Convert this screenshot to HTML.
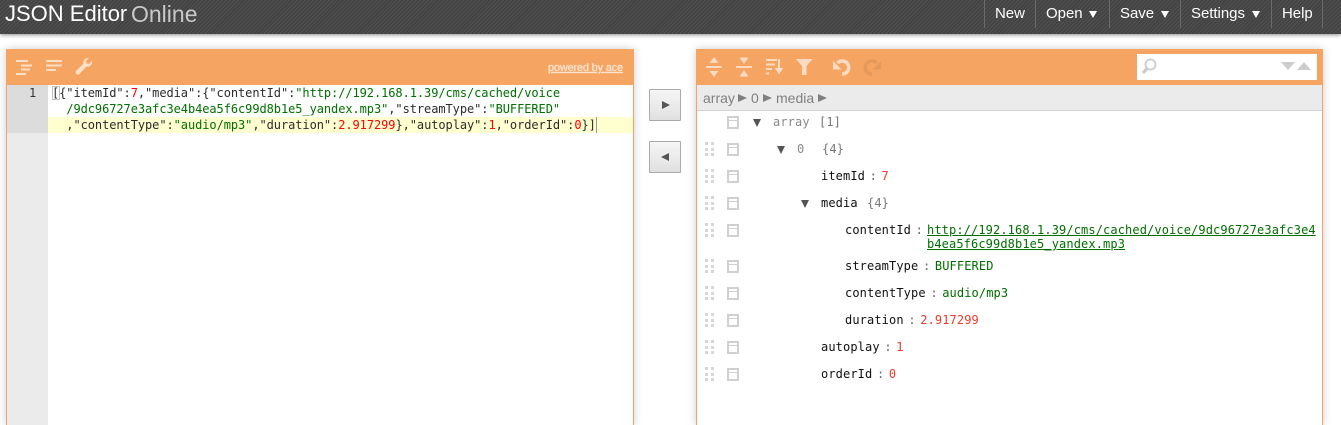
<!DOCTYPE html>
<html><head><meta charset="utf-8"><style>
html,body{margin:0;padding:0;background:#fff;width:1341px;height:425px;overflow:hidden}
.a{position:absolute}
body{font-family:"Liberation Sans",sans-serif;position:relative}
#hdr{left:0;top:0;width:1341px;height:34px;background:repeating-linear-gradient(135deg,#515151 0 1px,#434343 1px 2.8px);box-shadow:0 1px 4px rgba(0,0,0,.45)}
.menu{top:1px;height:26px;line-height:26px;font-size:15px;color:#fff;white-space:nowrap;letter-spacing:-.03px}
.sep{top:0;width:1px;height:28px;background:#6a6a6a}
.arr{top:11px;width:0;height:0;border-top:7px solid #fff;border-left:4.500px solid transparent;border-right:4.500px solid transparent}
.panel{box-shadow:0 0 8px rgba(0,0,0,.2);background:#fff;border-left:1px solid #f5a462;border-right:1px solid #f5a462;box-sizing:border-box}
.bar{background:#f5a462;height:36px}
.m{font-family:"DejaVu Sans Mono",monospace;font-size:12px;white-space:pre}
.l{left:52px;height:16px;line-height:16px;color:#2c2c2c;letter-spacing:-.07px}
.s{color:#007000}.n{color:#f00}
.r{height:14px;line-height:14px;letter-spacing:.11px}
.k{color:#111}.g{color:#888}.c{color:#777;margin-left:2px}
.p{display:inline-block;width:16.500px;text-align:center;color:#666;letter-spacing:0}
.t{color:#006f00}.v{color:#ee3a2a}
.btn{left:649px;width:32px;height:32px;box-sizing:border-box;border:1px solid #aaa;background:linear-gradient(#f6f6f6,#e0e0e0);border-radius:1px}
.drag{left:705px;width:9px;height:14px;background:
 linear-gradient(#d6d6d6,#d6d6d6) 0 0/3px 3px no-repeat,linear-gradient(#d6d6d6,#d6d6d6) 6px 0/3px 3px no-repeat,
 linear-gradient(#d6d6d6,#d6d6d6) 0 5.500px/3px 3px no-repeat,linear-gradient(#d6d6d6,#d6d6d6) 6px 5.500px/3px 3px no-repeat,
 linear-gradient(#d6d6d6,#d6d6d6) 0 11px/3px 3px no-repeat,linear-gradient(#d6d6d6,#d6d6d6) 6px 11px/3px 3px no-repeat}
.box{left:727px;width:12px;height:13px;box-sizing:border-box;border:2px solid #d0d0d0}
.box i{display:block;height:1px;margin-top:2px;background:#d0d0d0}
.tri{width:0;height:0;border-left:4.500px solid transparent;border-right:4.500px solid transparent;border-top:8px solid #555}
.nav{top:85px;height:26px;line-height:26px;font-size:14px;color:#808080}
.na{top:94px;width:0;height:0;border-left:9px solid #808080;border-top:4px solid transparent;border-bottom:4px solid transparent}
</style></head><body>
<div class="a" id="hdr"></div>
<div class="a" style="left:5px;top:-3px;height:34px;line-height:34px;font-size:22px;color:#fff;white-space:nowrap">JSON Editor</div>
<div class="a" style="left:131px;top:-3px;height:34px;line-height:34px;font-size:23px;color:#c9c9c9;white-space:nowrap">Online</div>

<div class="a sep" style="left:984px"></div><div class="a sep" style="left:1035px"></div><div class="a sep" style="left:1109px"></div><div class="a sep" style="left:1180px"></div><div class="a sep" style="left:1271px"></div><div class="a sep" style="left:1322px"></div>
<div class="a menu" style="left:995px">New</div>
<div class="a menu" style="left:1046px">Open</div><div class="a arr" style="left:1089px"></div>
<div class="a menu" style="left:1120px">Save</div><div class="a arr" style="left:1161px"></div>
<div class="a menu" style="left:1191px">Settings</div><div class="a arr" style="left:1252px"></div>
<div class="a menu" style="left:1282px">Help</div>

<!-- left panel -->
<div class="a panel" style="left:6px;top:49px;width:628px;height:376px">
 <div class="bar"></div>
 <div class="a" style="left:0;top:36px;width:41px;height:340px;background:#ebebeb"></div>
 <div class="a" style="left:0;top:36px;width:41px;height:48px;background:#dcdcdc"></div>
 <div class="a" style="left:41px;top:68px;width:585px;height:16px;background:#ffffd0"></div>
</div>
<svg class="a" style="left:14px;top:57px" width="80" height="22" fill="#fbe0c8">
 <rect x="2" y="3" width="12" height="2"/><rect x="7" y="7.500" width="11" height="2"/><rect x="7" y="11.500" width="9" height="2"/><rect x="2" y="16" width="10" height="2"/>
 <rect x="32" y="3" width="16" height="2"/><rect x="32" y="7.500" width="16" height="2"/><rect x="32" y="12" width="10" height="2"/>
 <path d="M62 14l7.500-7.500c-1-3 1.500-6 5.500-5.500l-3 3 .5 2.500 2.500.5 3-3c.5 4-2.500 6.500-5.500 5.500l-7 7.500c-2 2-5-1-3.500-3z"/>
</svg>
<div class="a" style="left:548px;top:61px;font-size:11px;color:#fde3cd;text-decoration:underline;white-space:nowrap;line-height:14px;letter-spacing:-.2px;text-shadow:0 0 1px #fde3cd">powered by ace</div>
<div class="a m" style="left:29px;top:85px;line-height:16px;color:#333">1</div>
<div class="a" style="left:52px;top:86px;width:8px;height:14px;box-sizing:border-box;border:1px solid #c0c0c0"></div>
<div class="a m l" style="top:85px">[{"itemId":<span class="n">7</span>,"media":{"contentId":<span class="s">"http://192.168.1.39/cms/cached/voice</span></div>
<div class="a m l" style="top:101px">  <span class="s">/9dc96727e3afc3e4b4ea5f6c99d8b1e5_yandex.mp3"</span>,"streamType":<span class="s">"BUFFERED"</span></div>
<div class="a m l" style="top:117px">  ,"contentType":<span class="s">"audio/mp3"</span>,"duration":<span class="n">2.917299</span>},"autoplay":<span class="n">1</span>,"orderId":<span class="n">0</span>}]</div>
<div class="a" style="left:596px;top:117px;width:1px;height:16px;background:#999"></div>

<!-- buttons -->
<div class="a btn" style="top:89px"></div>
<div class="a" style="left:662px;top:101px;border-left:8px solid #555;border-top:4px solid transparent;border-bottom:4px solid transparent"></div>
<div class="a btn" style="top:141px"></div>
<div class="a" style="left:661px;top:153px;border-right:8px solid #555;border-top:4px solid transparent;border-bottom:4px solid transparent"></div>

<!-- right panel -->
<div class="a panel" style="left:696px;top:49px;width:627px;height:376px"><div class="bar"></div></div>
<div class="a" style="left:697px;top:85px;width:625px;height:26px;background:#ebebeb;border-bottom:1px solid #d3d3d3;box-sizing:border-box"></div>
<svg class="a" style="left:700px;top:54px" width="190" height="26">
 <g fill="#fbdcc3">
 <rect x="6" y="12" width="16" height="2"/><path d="M14 3l4.500 6h-9zM14 23l4.500-6h-9z"/>
 <rect x="36" y="12" width="16" height="2"/><path d="M44 10l4.500-6.500h-9zM44 16l4.500 6.500h-9z"/>
 <rect x="66" y="5" width="11" height="2"/><rect x="66" y="9.500" width="9" height="2"/><rect x="66" y="14" width="6" height="2"/><rect x="66" y="18.500" width="3" height="2"/>
 <rect x="78" y="5" width="2" height="12"/><path d="M74.500 14h9l-4.500 6z"/>
 <path d="M96 5h16.500l-6 7v9h-4.500v-9z"/>
 <path d="M133 7v8.500h8.500z"/>
 </g>
 <path d="M137.500 9A6.500 6.500 0 1 1 142 20" fill="none" stroke="#fbdcc3" stroke-width="3.500"/>
 <path d="M176.500 9A6.500 6.500 0 1 0 172 20" fill="none" stroke="#e59a5d" stroke-width="3.500"/>
 <path d="M181 7v8.500h-8.500z" fill="#e59a5d"/>
</svg>
<div class="a" style="left:1137px;top:54px;width:180px;height:26px;background:#fff"></div>
<svg class="a" style="left:1140px;top:58px" width="20" height="18"><circle cx="10.500" cy="6.500" r="5" fill="none" stroke="#d0d0d0" stroke-width="2"/><path d="M2 14l4-5 2 3-4 4z" fill="#c8c8c8"/></svg>
<div class="a" style="left:1281px;top:62px;border-top:8px solid #ccc;border-left:7px solid transparent;border-right:7px solid transparent"></div>
<div class="a" style="left:1297px;top:62px;border-bottom:8px solid #ccc;border-left:7px solid transparent;border-right:7px solid transparent"></div>

<div class="a nav" style="left:703px">array</div>
<div class="a na" style="left:738px"></div>
<div class="a nav" style="left:751px">0</div>
<div class="a na" style="left:763px"></div>
<div class="a nav" style="left:776px">media</div>
<div class="a na" style="left:818px"></div>

<!-- tree gutter -->
<div class="a box" style="top:116px"><i></i></div>
<div class="a drag" style="top:142px"></div><div class="a box" style="top:143px"><i></i></div>
<div class="a drag" style="top:169px"></div><div class="a box" style="top:170px"><i></i></div>
<div class="a drag" style="top:196px"></div><div class="a box" style="top:197px"><i></i></div>
<div class="a drag" style="top:223px"></div><div class="a box" style="top:224px"><i></i></div>
<div class="a drag" style="top:259px"></div><div class="a box" style="top:260px"><i></i></div>
<div class="a drag" style="top:286px"></div><div class="a box" style="top:287px"><i></i></div>
<div class="a drag" style="top:313px"></div><div class="a box" style="top:314px"><i></i></div>
<div class="a drag" style="top:340px"></div><div class="a box" style="top:341px"><i></i></div>
<div class="a drag" style="top:367px"></div><div class="a box" style="top:368px"><i></i></div>

<div class="a tri" style="left:752.500px;top:119px"></div>
<div class="a tri" style="left:776.500px;top:146px"></div>
<div class="a tri" style="left:800.500px;top:200px"></div>

<div class="a m r g" style="left:773px;top:115px">array <span class="c">[1]</span></div>
<div class="a m r g" style="left:797px;top:142px">0</div><div class="a m r g" style="left:822px;top:142px"><span class="c" style="margin:0">{4}</span></div>
<div class="a m r k" style="left:821px;top:169px">itemId<span class="p">:</span><span class="v">7</span></div>
<div class="a m r k" style="left:821px;top:196px">media <span class="c">{4}</span></div>
<div class="a m r k" style="left:845px;top:223px">contentId<span class="p">:</span></div>
<div class="a m r t" style="left:927px;top:223px;text-decoration:underline">http://192.168.1.39/cms/cached/voice/9dc96727e3afc3e4</div>
<div class="a m r t" style="left:927px;top:237px;text-decoration:underline">b4ea5f6c99d8b1e5_yandex.mp3</div>
<div class="a m r k" style="left:845px;top:259px">streamType<span class="p">:</span><span class="t">BUFFERED</span></div>
<div class="a m r k" style="left:845px;top:286px">contentType<span class="p">:</span><span class="t">audio/mp3</span></div>
<div class="a m r k" style="left:845px;top:313px">duration<span class="p">:</span><span class="v">2.917299</span></div>
<div class="a m r k" style="left:821px;top:340px">autoplay<span class="p">:</span><span class="v">1</span></div>
<div class="a m r k" style="left:821px;top:367px">orderId<span class="p">:</span><span class="v">0</span></div>
</body></html>
